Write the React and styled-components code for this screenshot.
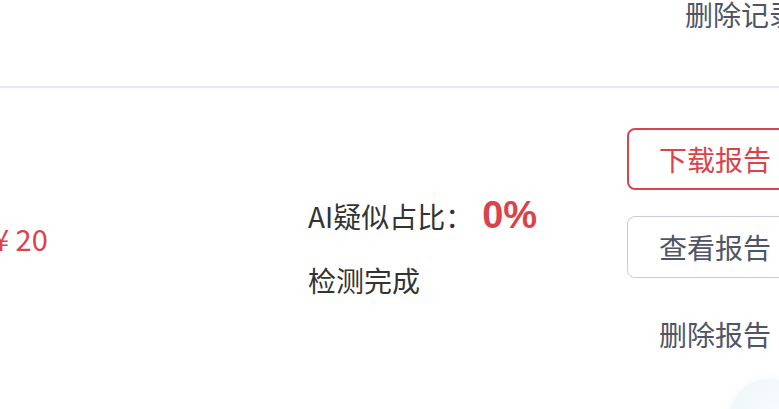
import React from 'react';
import styled, { createGlobalStyle } from 'styled-components';

const GlobalStyle = createGlobalStyle`
  html, body {
    margin: 0;
    padding: 0;
    background: #ffffff;
    overflow: hidden;
  }
  body {
    font-family: "Noto Sans CJK SC", "Noto Sans", sans-serif;
    color: #333333;
  }
`;

const Page = styled.div`
  position: relative;
  width: 779px;
  height: 409px;
  overflow: hidden;
  background: #ffffff;
`;

const List = styled.div`
  width: 880px;
  margin-left: -8px;
`;

const Row = styled.div`
  display: flex;
  align-items: ${(p) => (p.$top ? 'flex-start' : 'center')};
  height: ${(p) => (p.$height ? `${p.$height}px` : 'auto')};
  padding: ${(p) => (p.$top ? '0' : '40px 0')};
  border-bottom: ${(p) => (p.$divider ? '2px solid #e4e9f3' : 'none')};
  box-sizing: border-box;
`;

const PriceCol = styled.div`
  width: 316px;
  flex-shrink: 0;
  box-sizing: border-box;
  padding-left: 1px;
  font-size: 29px;
  line-height: 40px;
  color: #d9444b;
  white-space: pre;
`;

const ResultCol = styled.div`
  width: 319px;
  flex-shrink: 0;
  display: flex;
  flex-direction: column;
  gap: 22px;
  padding-top: ${(p) => (p.$flat ? 0 : 17)}px;
`;

const RatioLine = styled.div`
  display: flex;
  align-items: center;
  height: 44px;
  font-size: 28px;
  color: #333333;
`;

const Ratio = styled.span`
  margin-left: 9px;
  font-family: "Liberation Sans", Arial, sans-serif;
  font-weight: 700;
  font-size: 38px;
  color: #d9444b;
`;

const Status = styled.div`
  font-size: 28px;
  line-height: 40px;
  color: #333333;
`;

const Actions = styled.div`
  width: 176px;
  flex-shrink: 0;
  display: flex;
  flex-direction: column;
  gap: 26px;
  margin-left: ${(p) => p.$offset || 0}px;
`;

const Button = styled.button`
  height: 62px;
  box-sizing: border-box;
  border-radius: 8px;
  border: ${(p) => (p.$primary ? '2px solid #d9444b' : '1.5px solid #c8ccd4')};
  background: #ffffff;
  color: ${(p) => (p.$primary ? '#d9444b' : '#4f5566')};
  font-family: "Noto Sans CJK SC", sans-serif;
  font-size: 28px;
  padding: 0;
  cursor: pointer;
`;

const LinkText = styled.div`
  font-size: 28px;
  line-height: 28px;
  color: #4f5566;
  text-align: ${(p) => (p.$left ? 'left' : 'center')};
  margin-top: ${(p) => p.$mt || 0}px;
  white-space: nowrap;
  cursor: pointer;
`;

const FloatBall = styled.div`
  position: absolute;
  right: -30px;
  bottom: -50px;
  width: 80px;
  height: 80px;
  border-radius: 50%;
  background: radial-gradient(circle at 60% 40%, #f7fcfd 0%, #f0f8fa 60%, #fafdfd 100%);
  box-shadow: 0 0 8px rgba(200, 225, 232, 0.25);
`;

export default function App() {
  return (
    <Page>
      <GlobalStyle />
      <List>
        <Row $top $divider $height={88}>
          <PriceCol />
          <ResultCol $flat />
          <Actions $offset={58}>
            <LinkText $left>删除记录</LinkText>
          </Actions>
        </Row>
        <Row>
          <PriceCol>{'¥ 20'}</PriceCol>
          <ResultCol>
            <RatioLine>
              AI疑似占比：<Ratio>0%</Ratio>
            </RatioLine>
            <Status>检测完成</Status>
          </ResultCol>
          <Actions>
            <Button $primary>下载报告</Button>
            <Button>查看报告</Button>
            <LinkText $mt={16}>删除报告</LinkText>
          </Actions>
        </Row>
      </List>
      <FloatBall />
    </Page>
  );
}
